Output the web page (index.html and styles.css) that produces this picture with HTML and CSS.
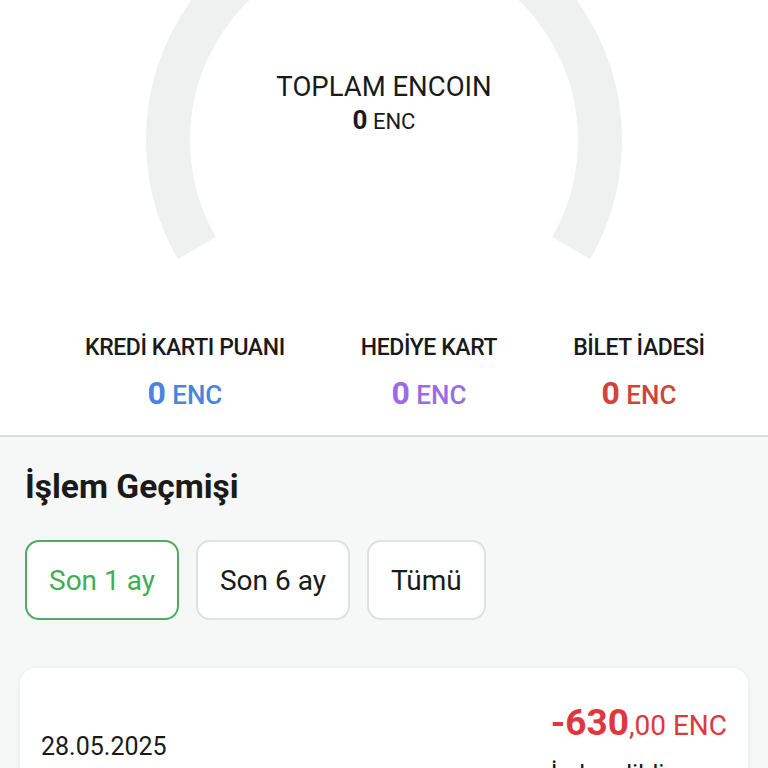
FILE: index.html
```html
<!DOCTYPE html>
<html lang="tr">

<head>
  <meta charset="UTF-8">
  <meta name="viewport" content="width=device-width, initial-scale=1.0">
  <title>Encoin</title>
  <link rel="stylesheet" href="styles.css">
</head>

<body>

  <div class="summary">
    <div class="gauge">
      <svg class="gaugeRing" width="480" height="290" viewBox="0 0 480 290">
        <path d="M 52.9 248 A 216 216 0 1 1 427.1 248" fill="none" stroke="#eef1f0" stroke-width="44" />
      </svg>
      <div class="gaugeText">
        <div class="gaugeTitle">TOPLAM ENCOIN</div>
        <div class="gaugeValue"><b>0</b> ENC</div>
      </div>
    </div>

    <div class="stats">
      <div class="stat">
        <div class="statLabel">KREDİ KARTI PUANI</div>
        <div class="statValue blue"><b>0</b> ENC</div>
      </div>
      <div class="stat">
        <div class="statLabel">HEDİYE KART</div>
        <div class="statValue purple"><b>0</b> ENC</div>
      </div>
      <div class="stat">
        <div class="statLabel">BİLET İADESİ</div>
        <div class="statValue red"><b>0</b> ENC</div>
      </div>
    </div>
  </div>

  <div class="history">
    <div class="historyTitle">İşlem Geçmişi</div>

    <div class="filters">
      <button class="filterBtn active">Son 1 ay</button>
      <button class="filterBtn">Son 6 ay</button>
      <button class="filterBtn">Tümü</button>
    </div>

    <div class="card">
      <div class="cardDate">28.05.2025</div>
      <div class="cardRight">
        <div class="cardAmount"><b>-630</b>,00 ENC</div>
        <div class="cardNote">İade edildi</div>
      </div>
    </div>
  </div>

</body>

</html>
```

FILE: styles.css
```css
body {
  margin: 0;
  height: 768px;
  overflow: hidden;
  font-family: Roboto, "Liberation Sans", sans-serif;
  color: #1a1a1a;
  background-color: #f6f7f7;
}

/* top summary */
.summary {
  background-color: white;
  border-bottom: 2px solid #dcdedd;
  height: 435px;
}

.gauge {
  position: relative;
  height: 290px;
  display: flex;
  justify-content: center;
}

.gaugeRing {
  display: block;
}

.gaugeText {
  position: absolute;
  top: 71px;
  left: 0;
  right: 0;
  text-align: center;
}

.gaugeTitle {
  font-size: 27.5px;
  line-height: 32px;
}

.gaugeValue {
  font-size: 22px;
  line-height: 34px;
}

.gaugeValue b {
  font-size: 26px;
}

.stats {
  display: flex;
  gap: 76px;
  padding-left: 85px;
  margin-top: 42px;
}

.stat {
  text-align: center;
}

.statLabel {
  font-size: 23px;
  font-weight: 500;
  line-height: 32px;
  letter-spacing: -0.4px;
}

.statValue {
  margin-top: 12px;
  font-size: 26px;
  font-weight: 500;
  line-height: 34px;
}

.statValue b {
  font-size: 32px;
}

.blue {
  color: #4a84dc;
}

.purple {
  color: #9b6be6;
}

.red {
  color: #d0443a;
}

/* history */
.history {
  padding: 0 20px 0 25px;
}

.historyTitle {
  margin-top: 28px;
  font-size: 33.5px;
  font-weight: bold;
  line-height: 44px;
}

.filters {
  display: flex;
  gap: 17px;
  margin-top: 31px;
}

.filterBtn {
  height: 80px;
  padding: 0 22px;
  background-color: white;
  border: 2px solid #e0e2e1;
  border-radius: 14px;
  font-family: Roboto, "Liberation Sans", sans-serif;
  font-size: 28px;
  color: #1a1a1a;
}

.filterBtn.active {
  border-color: #4cae5c;
  color: #3fae55;
}

.card {
  margin: 48px 0 0 -5px;
  height: 160px;
  padding: 34px 21px 0 21px;
  background-color: white;
  border-radius: 16px;
  box-shadow: 0 1px 6px rgba(0, 0, 0, 0.06);
  display: flex;
  justify-content: space-between;
  align-items: flex-start;
}

.cardDate {
  margin-top: 30px;
  font-size: 25px;
}

.cardRight {
  text-align: left;
}

.cardAmount {
  color: #e0373f;
  font-size: 28px;
  line-height: 42px;
}

.cardAmount b {
  font-size: 37px;
}

.cardNote {
  margin-top: 13px;
  font-size: 25px;
}
```
